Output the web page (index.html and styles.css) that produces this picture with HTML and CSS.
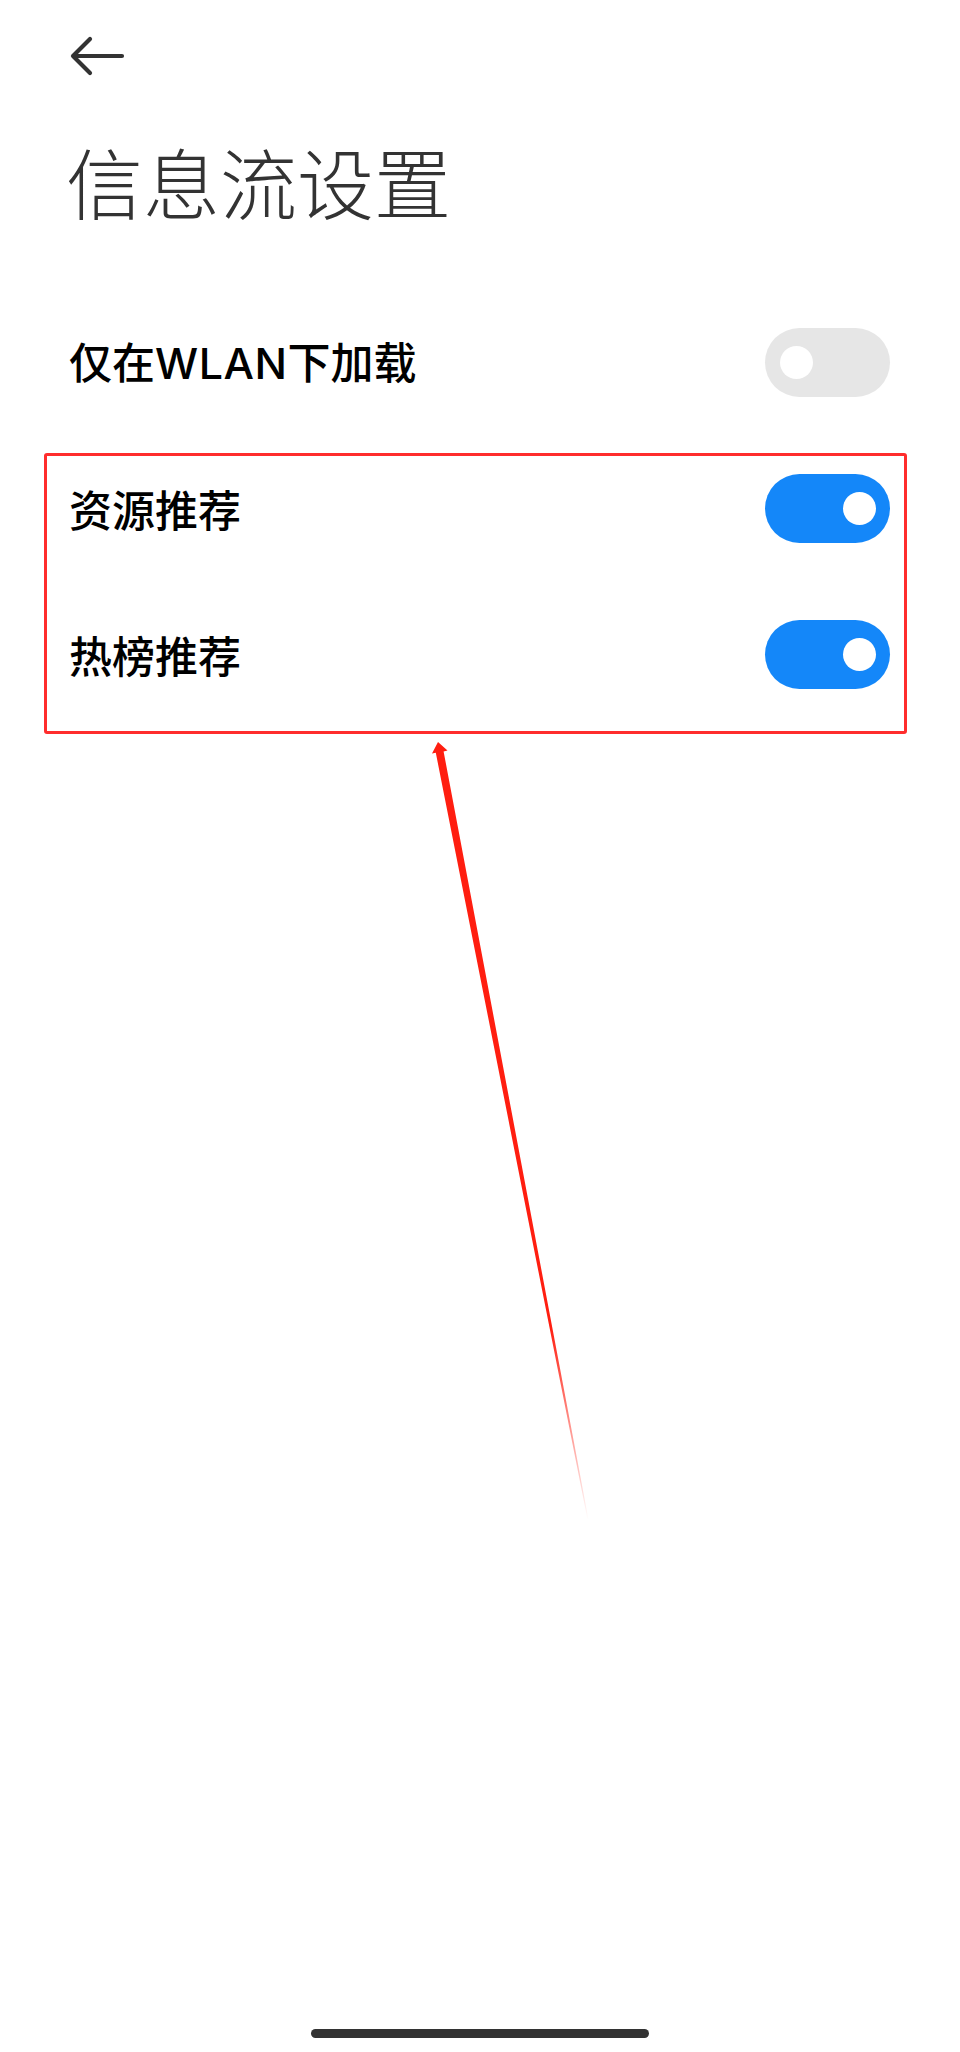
FILE: index.html
```html
<!DOCTYPE html>
<html lang="zh-CN">
<head>
<meta charset="utf-8">
<title>信息流设置</title>
<link rel="stylesheet" href="styles.css">
</head>
<body>
<div class="page">
  <header class="topbar">
    <svg class="back" width="56" height="40" viewBox="0 0 56 40" aria-hidden="true">
      <path d="M20 3 L3 20 L20 37 M3 20 H52" fill="none" stroke="#333" stroke-width="4.2" stroke-linecap="round" stroke-linejoin="round"/>
    </svg>
  </header>
  <h1 class="title">信息流设置</h1>
  <section class="settings">
    <div class="row">
      <span class="label">仅在<span class="latin">WLAN</span>下加载</span>
      <span class="switch"><span class="knob"></span></span>
    </div>
    <div class="row">
      <span class="label">资源推荐</span>
      <span class="switch on"><span class="knob"></span></span>
    </div>
    <div class="row">
      <span class="label">热榜推荐</span>
      <span class="switch on"><span class="knob"></span></span>
    </div>
  </section>
  <div class="highlight"></div>
  <svg class="pointer" width="960" height="2052" viewBox="0 0 960 2052" aria-hidden="true">
    <defs>
      <linearGradient id="fade" x1="438" y1="743" x2="588" y2="1520" gradientUnits="userSpaceOnUse">
        <stop offset="0" stop-color="#ff1e10" stop-opacity="1"/>
        <stop offset="0.75" stop-color="#ff1e10" stop-opacity="1"/>
        <stop offset="1" stop-color="#ff1e10" stop-opacity="0"/>
      </linearGradient>
    </defs>
    <polygon fill="url(#fade)" points="438,742 447.5,750.5 443.6,751.4 588.6,1520 587.6,1520 435.8,752.8 432,753.5"/>
  </svg>
  <div class="home-bar"></div>
</div>
</body>
</html>
```

FILE: styles.css
```css
html, body {
  margin: 0;
  padding: 0;
  background: #ffffff;
}

body {
  font-family: "Noto Sans CJK SC", "Noto Sans", sans-serif;
  color: #000;
}

.page {
  position: relative;
  width: 960px;
  height: 2052px;
  display: flex;
  flex-direction: column;
  overflow: hidden;
}

.topbar {
  height: 112px;
  padding-left: 70px;
  padding-top: 36px;
  box-sizing: border-box;
}

.back {
  display: block;
}

.title {
  margin: 0;
  padding-left: 66px;
  font-size: 77px;
  line-height: 77px;
  font-weight: 300;
  color: #333;
  height: 120px;
  padding-top: 30px;
  box-sizing: border-box;
  letter-spacing: 0;
}

.settings {
  margin-top: 57px;
  display: flex;
  flex-direction: column;
}

.row {
  height: 146px;
  display: flex;
  align-items: center;
  justify-content: space-between;
  padding: 0 70px 0 69px;
}

.label {
  font-size: 43px;
  font-weight: 500;
  line-height: 1;
  color: #000;
}

.latin {
  font-family: "Inter", "Noto Sans CJK SC", sans-serif;
  font-weight: 500;
  letter-spacing: 0.5px;
}

.switch {
  position: relative;
  width: 125px;
  height: 69px;
  border-radius: 35px;
  background: #e6e6e6;
  display: flex;
  align-items: center;
  padding: 0 15px;
  box-sizing: border-box;
}

.switch.on {
  background: #1487f9;
  justify-content: flex-end;
  padding: 0 14px;
}

.knob {
  width: 33px;
  height: 33px;
  border-radius: 50%;
  background: #fff;
}

.highlight {
  position: absolute;
  left: 44px;
  top: 453px;
  width: 863px;
  height: 281px;
  box-sizing: border-box;
  border: 3px solid #ff2d2d;
  border-radius: 3px;
}

.pointer {
  position: absolute;
  left: 0;
  top: 0;
  pointer-events: none;
}

.home-bar {
  margin-top: auto;
  margin-bottom: 14px;
  align-self: center;
  width: 338px;
  height: 9px;
  border-radius: 5px;
  background: #333;
}
```
